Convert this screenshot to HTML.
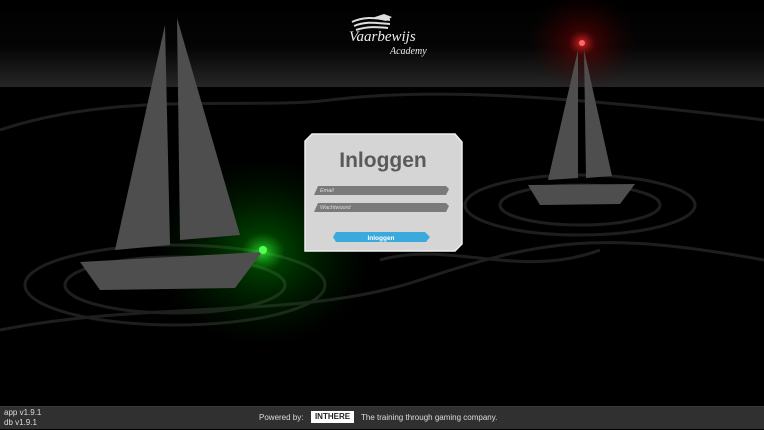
<!DOCTYPE html><html><head><style>
body{margin:0;width:764px;height:430px;overflow:hidden;background:#000;font-family:"Liberation Sans",sans-serif;position:relative}
.hdr{position:absolute;left:0;top:0;width:764px;height:87px;background:linear-gradient(#000 0,#050505 55%,#262626 100%)}
.ftr{position:absolute;left:0;top:406px;width:764px;height:22px;background:#303030;border-top:1px solid #3a3a3a}
</style></head><body>
<div class="hdr"></div>
<svg width="764" height="430" style="position:absolute;left:0;top:0">
<defs>
<radialGradient id="g"><stop offset="0" stop-color="#3f3" stop-opacity=".8"/><stop offset=".2" stop-color="#0a0" stop-opacity=".35"/><stop offset="1" stop-color="#040" stop-opacity="0"/></radialGradient>
<radialGradient id="r"><stop offset="0" stop-color="#f33" stop-opacity=".8"/><stop offset=".25" stop-color="#900" stop-opacity=".35"/><stop offset="1" stop-color="#400" stop-opacity="0"/></radialGradient>
</defs>
<g fill="none" stroke="#1e1e1e" stroke-width="3">
<path d="M0 130 C120 90 250 110 330 100 S520 90 764 120"/>
<path d="M0 330 C150 300 300 320 420 280 S600 230 764 260"/>
<ellipse cx="175" cy="285" rx="150" ry="40"/><ellipse cx="175" cy="285" rx="110" ry="28"/>
<ellipse cx="580" cy="205" rx="115" ry="30"/><ellipse cx="580" cy="205" rx="80" ry="20"/>
<path d="M380 260 C450 240 520 280 600 250"/>
</g>
<ellipse cx="263" cy="252" rx="110" ry="95" fill="url(#g)"/>
<ellipse cx="582" cy="43" rx="55" ry="50" fill="url(#r)"/>
<g fill="#4e4e4e">
<polygon points="165,25 115,250 170,245"/>
<polygon points="177,18 180,240 240,235"/>
<polygon points="80,262 262,252 235,288 100,290"/>
<polygon points="578,50 548,180 578,178"/>
<polygon points="584,50 586,178 612,176"/>
<polygon points="528,185 635,184 620,204 540,205"/>
</g>
<circle cx="263" cy="250" r="4" fill="#5f5"/>
<circle cx="582" cy="43" r="3" fill="#f66"/>
<path d="M312 134 H455 L462 142 V244 L455 251 H305 V141 Z" fill="#d5d5d5" stroke="#eee" stroke-width="1.5"/>
<path d="M318 186 H446 L449 189 L446 195 H314 Z" fill="#7a7a7a"/>
<path d="M318 203 H446 L449 206 L446 212 H314 Z" fill="#7a7a7a"/>
<path d="M336 232 H425 L430 237 L426 242 H336 L333 237 Z" fill="#3aa9dc"/>
<text x="383" y="167" font-size="21" font-weight="bold" fill="#5a5a5a" text-anchor="middle">Inloggen</text>
<text x="320" y="192" font-size="5.5" font-style="italic" fill="#ddd">Email</text>
<text x="320" y="209" font-size="5.5" font-style="italic" fill="#ddd">Wachtwoord</text>
<text x="381" y="240" font-size="6.5" font-weight="bold" fill="#fff" text-anchor="middle">Inloggen</text>
<path d="M352 22 C365 16 375 18 390 20 M354 26 C366 21 376 23 390 24 M356 30 C368 26 378 27 388 28" stroke="#ddd" stroke-width="2" fill="none"/>
<path d="M372 18 L384 14 L392 17 L386 21 Z" fill="#ddd"/>
<text x="349" y="41" font-size="15" font-style="italic" fill="#eee" font-family="Liberation Serif">Vaarbewijs</text>
<text x="390" y="54" font-size="10" font-style="italic" fill="#eee" font-family="Liberation Serif">Academy</text>
</svg>
<div class="ftr"></div>
<div style="position:absolute;left:4px;top:408px;font-size:8px;color:#ddd;line-height:10px">app v1.9.1<br>db v1.9.1</div>
<div style="position:absolute;left:259px;top:413px;font-size:8px;color:#ddd">Powered by:</div>
<div style="position:absolute;left:311px;top:411px;width:43px;height:12px;background:#fff;color:#222;font-size:8px;font-weight:bold;text-align:center;line-height:12px">INTHERE</div>
<div style="position:absolute;left:361px;top:413px;font-size:8px;color:#ddd">The training through gaming company.</div>
</body></html>
